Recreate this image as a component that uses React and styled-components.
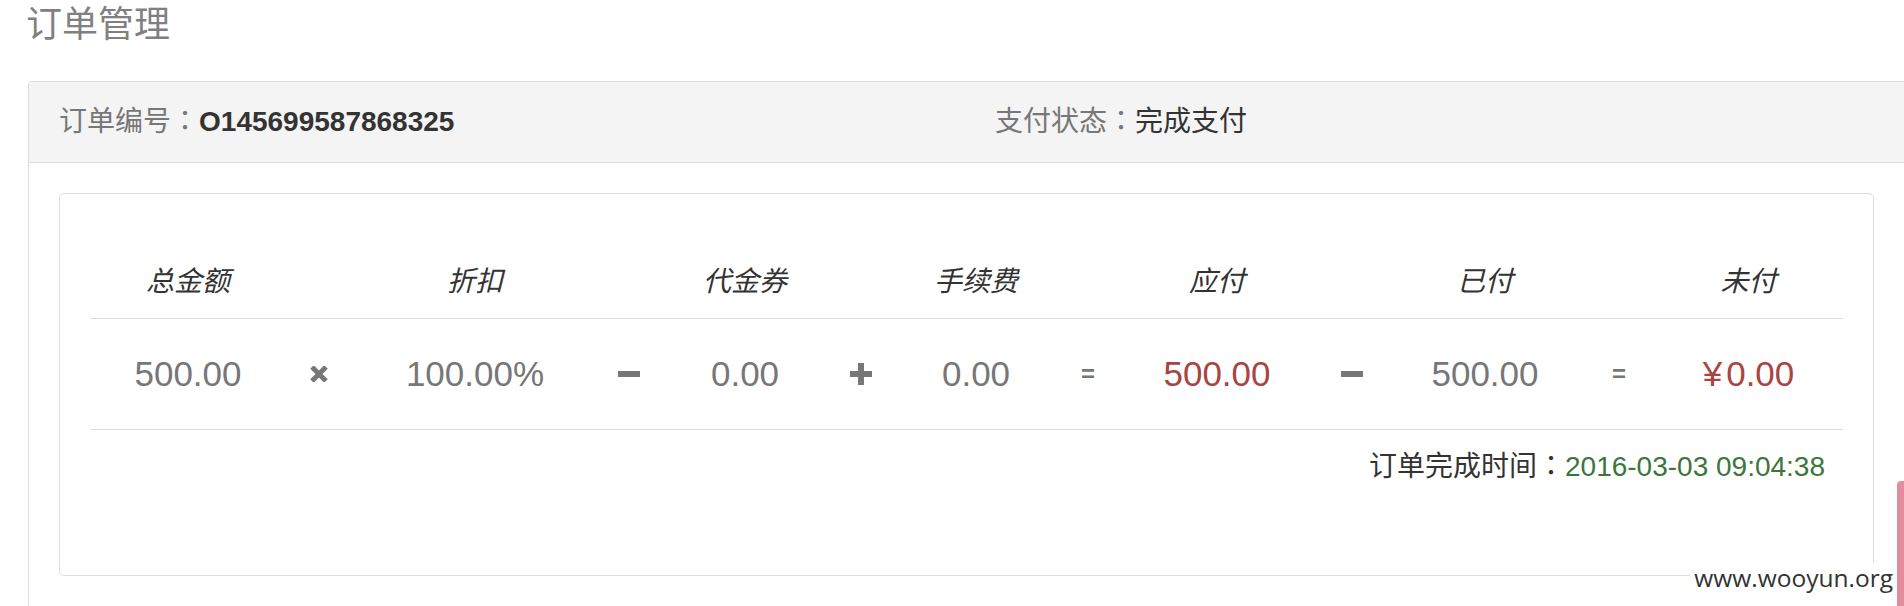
import React from "react";
import styled, { createGlobalStyle } from "styled-components";

const GlobalStyle = createGlobalStyle`
  html, body {
    margin: 0;
    padding: 0;
    background: #ffffff;
    overflow: hidden;
  }
  body {
    font-family: "Liberation Sans", Arial, "Noto Sans CJK SC", sans-serif;
    color: #333333;
  }
`;

const COLUMNS = "196px 66px 246px 62px 170px 62px 168px 56px 202px 68px 198px 70px 1fr";

const Page = styled.div`
  position: relative;
  height: 606px;
  padding: 5px 0 0 28px;
  box-sizing: border-box;
  overflow: hidden;
`;

const Title = styled.h1`
  margin: 0 0 36px -2px;
  font-size: 36px;
  line-height: 40px;
  font-weight: normal;
  color: #808080;
`;

const Panel = styled.section`
  border: 1px solid #dddddd;
  border-right: none;
  border-radius: 4px 0 0 4px;
  background: #ffffff;
`;

const PanelHeading = styled.header`
  display: grid;
  grid-template-columns: 936px 1fr;
  padding: 20px 30px 20px 30px;
  background: #f4f4f4;
  border-bottom: 1px solid #dddddd;
  font-size: 28px;
  line-height: 40px;
`;

const HeadItem = styled.div`
  white-space: nowrap;
`;

const Label = styled.span`
  color: #777777;
`;

const Colon = styled.span`
  font-family: "Noto Sans CJK TC", "Noto Sans CJK SC", sans-serif;
  line-height: 1;
`;

const OrderNo = styled.span`
  font-weight: bold;
  color: #333333;
`;

const Status = styled.span`
  color: #333333;
`;

const PanelBody = styled.div`
  padding: 30px 30px 60px 30px;
`;

const InnerPanel = styled.div`
  border: 1px solid #dddddd;
  border-radius: 5px;
  padding: 30px 30px 0 30px;
`;

const Row = styled.div`
  display: grid;
  grid-template-columns: ${COLUMNS};
  border-bottom: 1px solid #dddddd;
`;

const HeadCell = styled.div`
  padding: 38px 0 16px;
  text-align: center;
  font-size: 28px;
  line-height: 40px;
  font-style: italic;
  color: #333333;
  white-space: nowrap;
`;

const ValueCell = styled.div`
  padding: 30px 0;
  height: 50px;
  display: flex;
  align-items: center;
  justify-content: center;
  font-size: 35px;
  line-height: 50px;
  color: ${(p) => (p.$danger ? "#a94442" : "#777777")};
  white-space: nowrap;
`;

const Yen = styled.span`
  margin-right: 4px;
`;

const EqualSign = styled.span`
  font-size: 24px;
  font-weight: bold;
  color: #777777;
`;

const Completion = styled.div`
  padding: 17px 18px 88px 0;
  text-align: right;
  font-size: 28px;
  line-height: 40px;
  color: #333333;
`;

const DateText = styled.span`
  color: #3c763d;
`;

const Watermark = styled.div`
  position: absolute;
  right: 8px;
  top: 563px;
  padding: 0 3px 0 4px;
  background: #ffffff;
  font-size: 24.5px;
  line-height: 30px;
  color: #333333;
  font-family: "Open Sans", "Liberation Sans", sans-serif;
  height: 43px;
`;

const SideTab = styled.div`
  position: absolute;
  right: 0;
  top: 481px;
  width: 7px;
  bottom: 0;
  background: #e38c9d;
  border-top-left-radius: 4px;
`;

const Times = () => (
  <svg width="18" height="16" viewBox="0 0 18 16" aria-hidden="true">
    <path d="M2 1 L16 15 M16 1 L2 15" stroke="#777777" strokeWidth="5" fill="none" />
  </svg>
);

const Minus = () => (
  <svg width="22" height="6" viewBox="0 0 22 6" aria-hidden="true">
    <rect x="0" y="0" width="22" height="6" fill="#777777" />
  </svg>
);

const Plus = () => (
  <svg width="22" height="22" viewBox="0 0 22 22" aria-hidden="true">
    <rect x="0" y="8" width="22" height="6" fill="#777777" />
    <rect x="8" y="0" width="6" height="22" fill="#777777" />
  </svg>
);

const headers = ["总金额", "", "折扣", "", "代金券", "", "手续费", "", "应付", "", "已付", "", "未付"];

export default function App() {
  return (
    <>
      <GlobalStyle />
      <Page>
        <Title>订单管理</Title>
        <Panel>
          <PanelHeading>
            <HeadItem>
              <Label>订单编号<Colon>：</Colon></Label>
              <OrderNo>O145699587868325</OrderNo>
            </HeadItem>
            <HeadItem>
              <Label>支付状态<Colon>：</Colon></Label>
              <Status>完成支付</Status>
            </HeadItem>
          </PanelHeading>
          <PanelBody>
            <InnerPanel>
              <Row>
                {headers.map((h, i) => (
                  <HeadCell key={i}>{h}</HeadCell>
                ))}
              </Row>
              <Row>
                <ValueCell>500.00</ValueCell>
                <ValueCell><Times /></ValueCell>
                <ValueCell>100.00%</ValueCell>
                <ValueCell><Minus /></ValueCell>
                <ValueCell>0.00</ValueCell>
                <ValueCell><Plus /></ValueCell>
                <ValueCell>0.00</ValueCell>
                <ValueCell><EqualSign>=</EqualSign></ValueCell>
                <ValueCell $danger>500.00</ValueCell>
                <ValueCell><Minus /></ValueCell>
                <ValueCell>500.00</ValueCell>
                <ValueCell><EqualSign>=</EqualSign></ValueCell>
                <ValueCell $danger><Yen>¥</Yen>0.00</ValueCell>
              </Row>
              <Completion>
                订单完成时间<Colon>：</Colon><DateText>2016-03-03 09:04:38</DateText>
              </Completion>
            </InnerPanel>
          </PanelBody>
        </Panel>
        <Watermark>www.wooyun.org</Watermark>
        <SideTab />
      </Page>
    </>
  );
}
